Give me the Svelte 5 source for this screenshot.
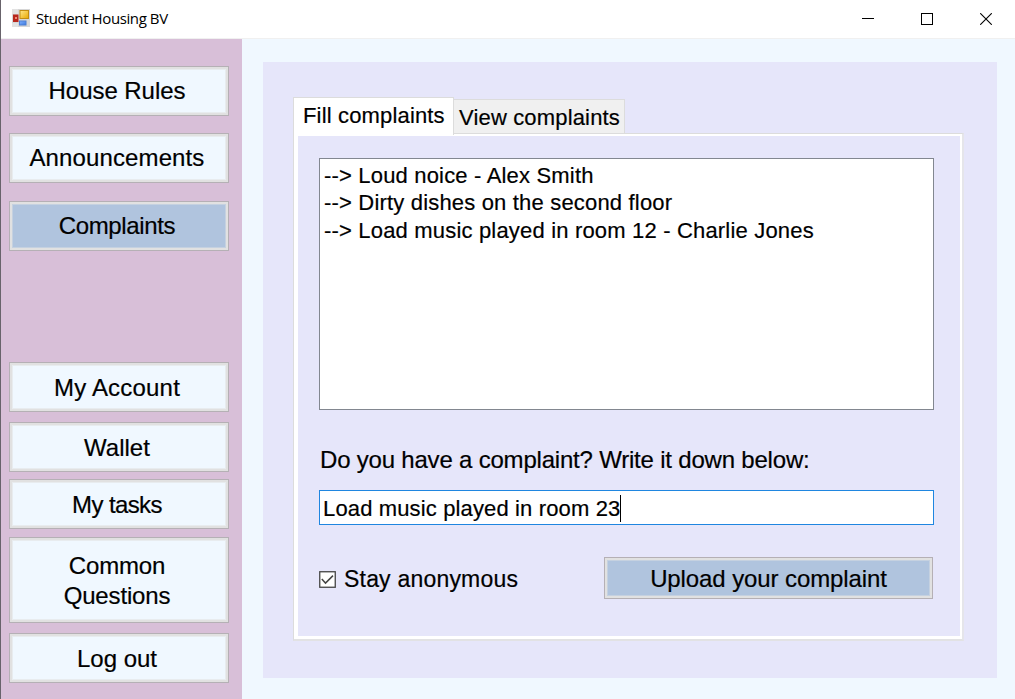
<script>
  const topLinks = [
    { label: 'House Rules', spacing: -0.05 },
    { label: 'Announcements', spacing: 0.12 },
    { label: 'Complaints', spacing: -0.35, active: true },
  ];
  const bottomLinks = [
    { label: 'My Account', kind: 'account', spacing: 0.2 },
    { label: 'Wallet', kind: 'wallet', spacing: 0 },
    { label: 'My tasks', kind: 'tasks', spacing: -0.6 },
    { label: 'Common\nQuestions', kind: 'questions', spacing: -0.15 },
    { label: 'Log out', kind: 'logout', spacing: 0 },
  ];
  const complaints = [
    'Loud noice - Alex Smith',
    'Dirty dishes on the second floor',
    'Load music played in room 12 - Charlie Jones',
  ];
  let draft = 'Load music played in room 23';
</script>

<div class="window">
  <header>
    <svg class="logo" width="18" height="18" viewBox="0 0 18 18">
      <defs>
        <linearGradient id="gold" x2="1" y2="1"><stop stop-color="#ffe88a" /><stop offset="1" stop-color="#e9a800" /></linearGradient>
        <linearGradient id="blue" x2="1" y2="1"><stop stop-color="#7fb0ff" /><stop offset="1" stop-color="#3c78dd" /></linearGradient>
      </defs>
      <path d="M0 0h18v18H0z" fill="#d6d6d6" />
      <path d="M0 0h6v5H0zM0 14h6v4H0z" fill="#e2e2e2" />
      <rect x="1" y="5.5" width="5.5" height="7.5" fill="#b8271c" />
      <rect x="3" y="8" width="2" height="2" fill="#f08a76" />
      <rect x="8" y="1.5" width="8.5" height="8" fill="url(#gold)" stroke="#c28d12" />
      <rect x="7.5" y="12" width="6.5" height="4" fill="url(#blue)" stroke="#4b7fd4" />
    </svg>
    <span class="title">Student Housing BV</span>
    <div class="controls">
      <svg width="12" height="12" viewBox="0 0 12 12"><path d="M0 5.5h12" stroke="#000" /></svg>
      <svg width="12" height="12" viewBox="0 0 12 12"><rect x=".5" y=".5" width="11" height="11" fill="none" stroke="#000" /></svg>
      <svg width="12" height="12" viewBox="0 0 12 12"><path d="M.2.2l11.6 11.6M11.8.2L.2 11.8" stroke="#000" stroke-width="1.1" /></svg>
    </div>
  </header>
  <div class="body">
    <nav>
      <div class="top">
        {#each topLinks as link}
          <button class:active={link.active}><span style="letter-spacing:{link.spacing}px">{link.label}</span></button>
        {/each}
      </div>
      <div class="bottom">
        {#each bottomLinks as link}
          <button class={link.kind}><span style="letter-spacing:{link.spacing}px">{link.label}</span></button>
        {/each}
      </div>
    </nav>
    <main>
      <div class="tabs">
        <div class="tab selected">Fill complaints</div>
        <div class="tab">View complaints</div>
      </div>
      <section>
        <div class="list">
          {#each complaints as item}<div class="row">--&gt; {item}</div>{/each}
        </div>
        <div class="question">Do you have a complaint? Write it down below:</div>
        <div class="field"><span>{draft}</span><i></i></div>
        <div class="actions">
          <svg width="17" height="17" viewBox="0 0 17 17">
            <rect x=".75" y=".75" width="15.5" height="15.5" fill="#fff" stroke="#444" stroke-width="1.3" />
            <path d="M2.8 8.1l3.7 4L14 4.6" fill="none" stroke="#444" stroke-width="1.5" />
          </svg>
          <span class="anon">Stay anonymous</span>
          <button class="active upload"><span>Upload your complaint</span></button>
        </div>
      </section>
    </main>
  </div>
</div>

<style>
  :global(body) { margin: 0; overflow: hidden; }
  .window {
    box-sizing: border-box;
    width: 1015px;
    height: 699px;
    display: flex;
    flex-direction: column;
    border-left: 1px solid #68636b;
    background: #fff;
    color: #000;
    font-family: 'Liberation Sans', Arial, sans-serif;
    white-space: nowrap;
  }
  header {
    box-sizing: border-box;
    height: 39px;
    flex: none;
    display: flex;
    align-items: center;
    padding: 0 23px 1px 11px;
    border-bottom: 1px solid #f0f0f0;
  }
  .logo { display: block; margin-bottom: 2px; }
  .title { margin: 0 0 2px 6px; font: 15px/20px 'Open Sans', sans-serif; letter-spacing: -0.4px; }
  .controls { margin-left: auto; display: flex; gap: 47px; }
  .controls svg { display: block; }
  .body { flex: 1; display: flex; background: #f0f8ff; min-height: 0; }
  nav {
    box-sizing: border-box;
    width: 241px;
    padding: 26.8px 0 0 8px;
    background: #d8bfd8;
  }
  .top, .bottom { display: flex; flex-direction: column; }
  .top { gap: 17.4px; }
  .bottom { margin-top: 111.4px; }
  button {
    box-sizing: border-box;
    width: 220px;
    height: 50px;
    padding: 0 4px 0 0;
    border: 1px solid #b5b0b5;
    background: #f0f8ff;
    box-shadow: inset 0 0 0 2px #e1e1e1, inset 0 0 0 3px #e8ecef;
    font: 24px/30px 'Liberation Sans', Arial, sans-serif;
    -webkit-text-stroke: 0.2px #000;
    color: #000;
    white-space: pre;
    display: block;
  }
  button.active { background: #b0c4de; box-shadow: inset 0 0 0 2px #e1e1e1, inset 0 0 0 3px #c5d1e0; }
  .bottom button { padding-top: 2px; }
  .wallet { margin-top: 10px; }
  .tasks { margin-top: 7px; }
  .questions { margin-top: 8px; height: 86px; }
  .logout { margin-top: 10px; }
  main {
    box-sizing: border-box;
    width: 734px;
    height: 616px;
    margin: 23px 0 0 21px;
    padding: 35px 33px 0 30px;
    background: #e6e6fa;
    -webkit-text-stroke: 0.2px #000;
  }
  .tabs { display: flex; align-items: flex-end; height: 36px; }
  .tab {
    box-sizing: border-box;
    height: 34px;
    width: 171px;
    padding-left: 5px;
    background: #f0f0f0;
    border: 1px solid #dcdcdc;
    border-left: 0;
    border-bottom: 0;
    font-size: 22px;
    line-height: 36px;
    letter-spacing: 0.16px;
  }
  .tab.selected {
    position: relative;
    width: 161px;
    height: 38px;
    margin-bottom: -2px;
    line-height: 35px;
    padding-left: 9px;
    background: #fff;
    border-left: 1px solid #dcdcdc;
  }
  section {
    box-sizing: border-box;
    width: 671px;
    height: 508px;
    padding: 24px 0 0 25px;
    border: 1px solid #dcdcdc;
    border-right: 2px solid #e5e5ea;
    border-bottom: 2px solid #e2e2e4;
    box-shadow: inset 4px 0 #fff, inset -2px 0 #fff, inset 0 2px #fff, inset 0 -3px #fff;
    display: flex;
    flex-direction: column;
  }
  .list {
    box-sizing: border-box;
    width: 615px;
    height: 252px;
    flex: none;
    border: 1px solid #828790;
    background: #fff;
    padding: 2.6px 0 0 4px;
  }
  .row { font-size: 22px; line-height: 27.5px; letter-spacing: 0.18px; }
  .question { margin: 35px 0 0 1px; font-size: 24px; line-height: 30px; letter-spacing: -0.2px; }
  .field {
    box-sizing: border-box;
    width: 615px;
    height: 35px;
    margin-top: 15px;
    border: 1px solid #1f86e0;
    background: #fff;
    display: flex;
    align-items: center;
    padding: 3px 0 0 3px;
    font-size: 22px;
    letter-spacing: 0.14px;
  }
  .field i { width: 1px; height: 27px; margin-top: -2px; background: #000; }
  .actions { display: flex; align-items: center; margin-top: 32px; width: 614px; height: 42px; }
  .actions svg { margin-top: 3px; }
  .anon { margin-left: 8px; font-size: 23px; line-height: 42px; padding-top: 2px; letter-spacing: 0.2px; }
  .upload { margin-left: auto; width: 329px; height: 42px; padding: 1px 0 0; letter-spacing: -0.1px; }
</style>
